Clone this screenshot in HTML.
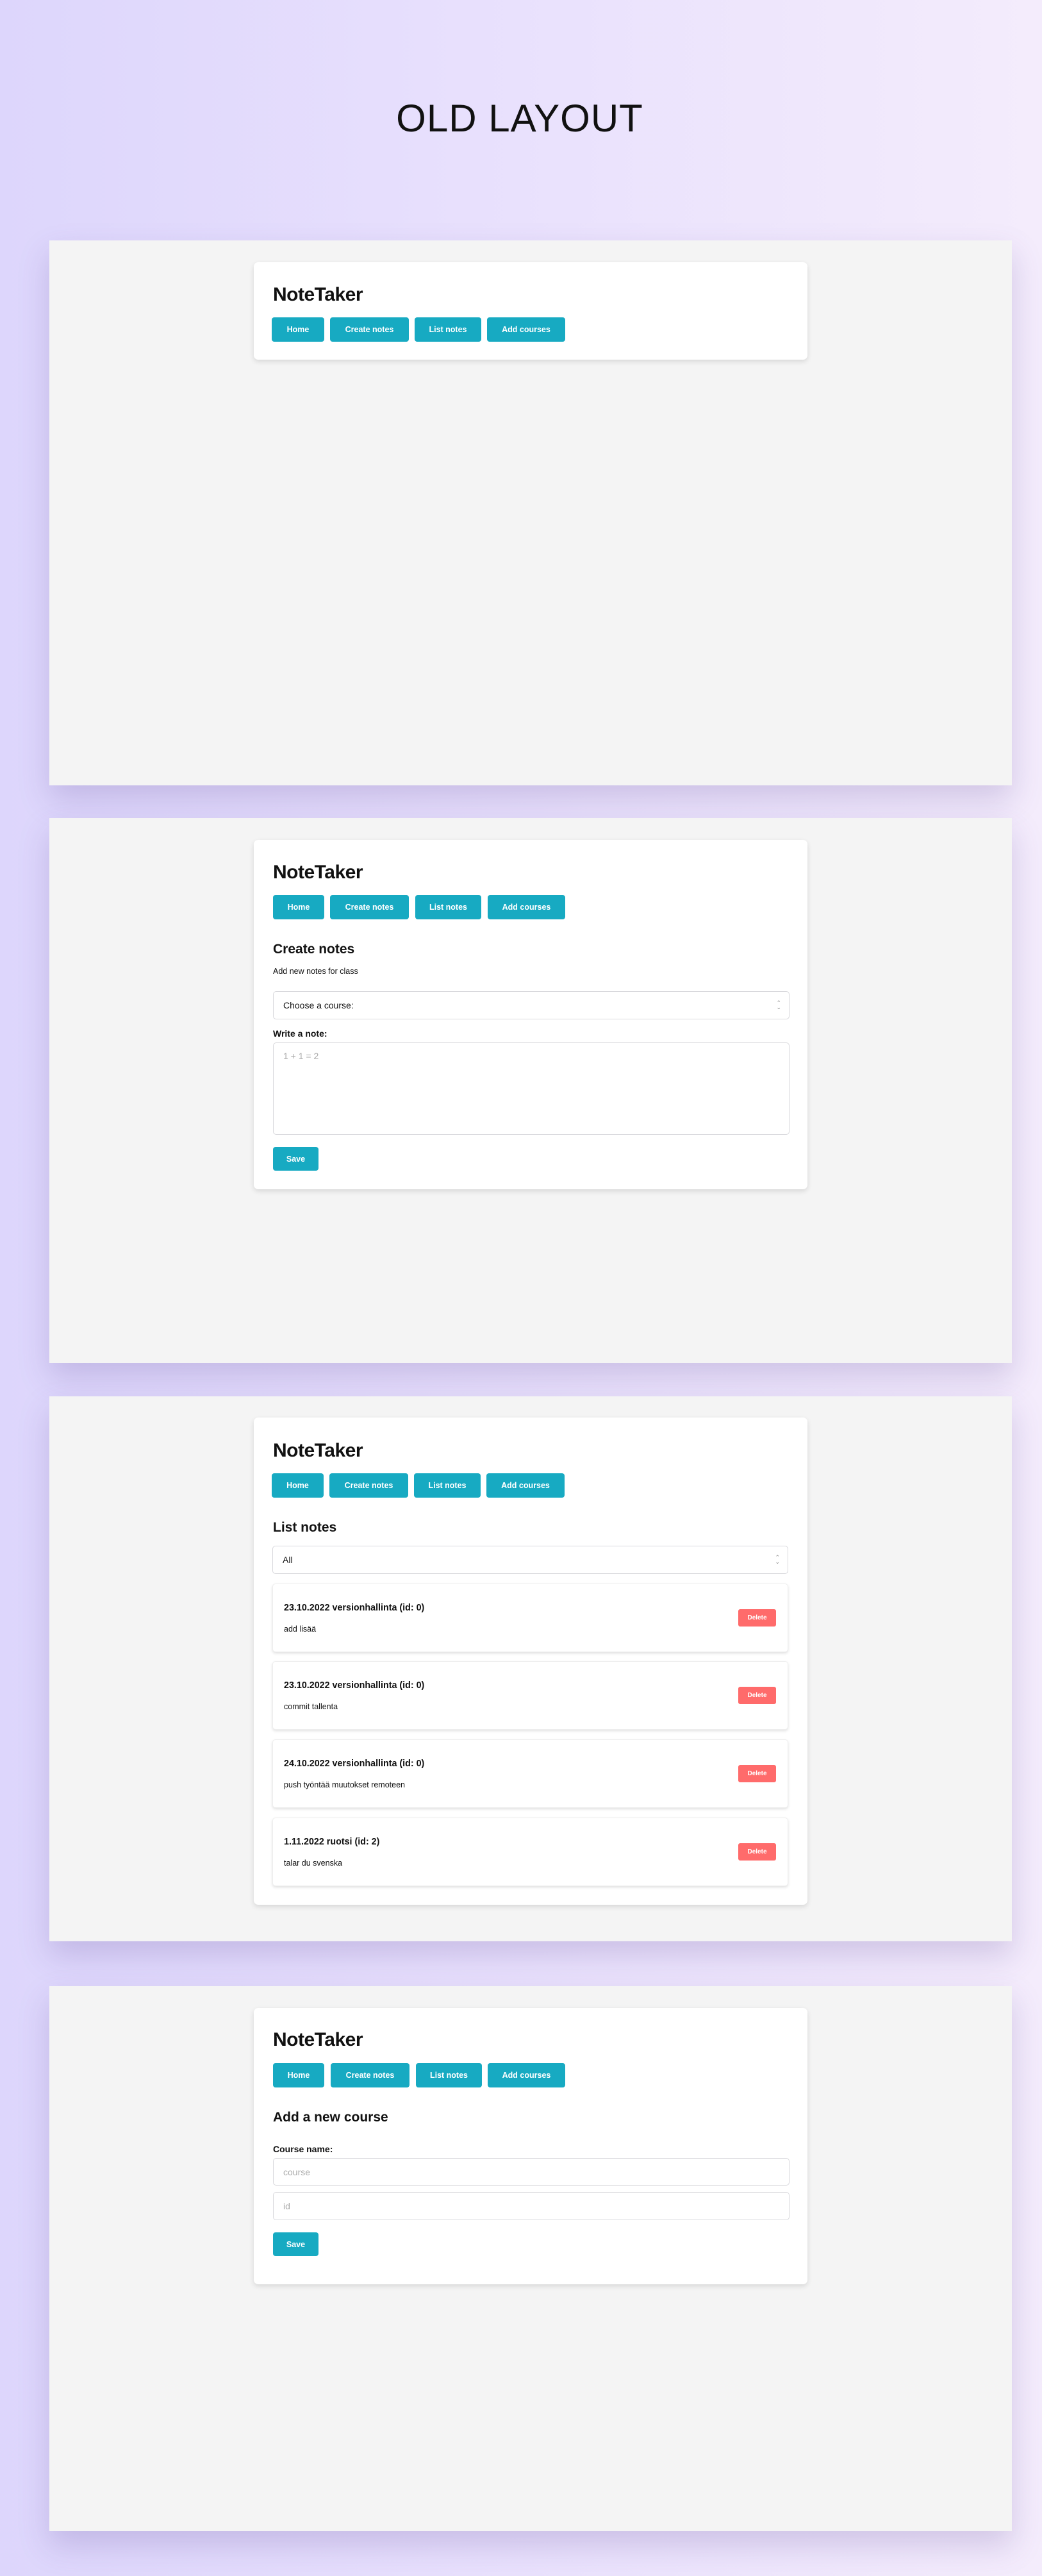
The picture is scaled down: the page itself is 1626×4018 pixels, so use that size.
<!DOCTYPE html>
<html><head><meta charset="utf-8"><style>
*{margin:0;padding:0;box-sizing:border-box}
body{width:1626px;height:4018px;position:relative;overflow:hidden;font-family:"Liberation Sans",sans-serif;color:#111;
background:linear-gradient(90deg,#ddd6fc 0%,#e8e0fd 45%,#f4ecfc 100%)}
.a{position:absolute}
.h1{left:0;width:1622px;top:150px;text-align:center;font-size:60px;line-height:70px;font-weight:300;color:#111;letter-spacing:1px}
.frame{position:absolute;left:77px;width:1502px;height:850px;background:#f4f4f4;box-shadow:0 22px 45px rgba(90,70,150,0.22)}
.card{position:absolute;left:396px;width:864px;background:#fff;border-radius:7px;box-shadow:0 3px 8px rgba(0,0,0,0.12)}
.t{position:absolute;left:426px;font-size:30px;font-weight:bold;line-height:30px;letter-spacing:-0.5px}
.btn{position:absolute;height:38px;background:#17aac2;color:#fff;font-size:12.5px;font-weight:bold;border-radius:4px;display:flex;align-items:center;justify-content:center}
.h2{position:absolute;left:426px;font-size:21px;font-weight:bold;line-height:24px}
.in{position:absolute;left:426px;width:806px;border:1px solid #d8d8dc;border-radius:5px;background:#fff;font-size:14px;padding-left:15px;display:flex;align-items:center}
.ph{color:#aaa}
.note{position:absolute;left:425px;width:805px;height:107px;background:#fff;border:1px solid #eee;border-radius:5px;box-shadow:0 2px 4px rgba(0,0,0,0.12)}
.nt{position:absolute;left:17px;top:29px;font-size:14.3px;font-weight:bold;color:#111}
.nx{position:absolute;left:17px;top:63px;font-size:12.5px}
.del{position:absolute;left:726px;top:39px;width:59px;height:27px;background:#ff6b6b;border-radius:3px;color:#fff;font-size:10px;font-weight:bold;display:flex;align-items:center;justify-content:center}
.arr{position:absolute;right:12px;top:50%;transform:translateY(-50%);font-size:9px;color:#888;line-height:7px;text-align:center}
.save{position:absolute;left:426px;width:71px;height:37px;background:#17aac2;color:#fff;font-size:12.5px;font-weight:bold;border-radius:4px;display:flex;align-items:center;justify-content:center}
.lbl{position:absolute;left:426px;font-size:14px;font-weight:bold}
</style></head><body>
<div class="a h1">OLD LAYOUT</div>

<div class="frame" style="top:375px"></div>
<div class="frame" style="top:1276px"></div>
<div class="frame" style="top:2178px"></div>
<div class="frame" style="top:3098px"></div>

<!-- card 1 -->
<div class="card" style="top:409px;height:152px"></div>
<div class="t" style="top:445px">NoteTaker</div>
<div class="btn" style="left:424px;top:495px;width:82px">Home</div>
<div class="btn" style="left:515px;top:495px;width:123px">Create notes</div>
<div class="btn" style="left:647px;top:495px;width:104px">List notes</div>
<div class="btn" style="left:760px;top:495px;width:122px">Add courses</div>

<!-- card 2 -->
<div class="card" style="top:1310px;height:545px"></div>
<div class="t" style="top:1346px">NoteTaker</div>
<div class="btn" style="left:426px;top:1396px;width:80px">Home</div>
<div class="btn" style="left:515px;top:1396px;width:123px">Create notes</div>
<div class="btn" style="left:648px;top:1396px;width:103px">List notes</div>
<div class="btn" style="left:761px;top:1396px;width:121px">Add courses</div>
<div class="h2" style="top:1469px">Create notes</div>
<div class="a" style="left:426px;top:1508px;font-size:12.5px">Add new notes for class</div>
<div class="in" style="top:1546px;height:44px">Choose a course:<div class="arr">&#8963;<br>&#8964;</div></div>
<div class="lbl" style="top:1604px">Write a note:</div>
<div class="in" style="top:1626px;height:144px;align-items:flex-start;padding-top:12px"><span class="ph">1 + 1 = 2</span></div>
<div class="save" style="top:1789px">Save</div>

<!-- card 3 -->
<div class="card" style="top:2211px;height:760px"></div>
<div class="t" style="top:2248px">NoteTaker</div>
<div class="btn" style="left:424px;top:2298px;width:81px">Home</div>
<div class="btn" style="left:514px;top:2298px;width:123px">Create notes</div>
<div class="btn" style="left:646px;top:2298px;width:104px">List notes</div>
<div class="btn" style="left:759px;top:2298px;width:122px">Add courses</div>
<div class="h2" style="top:2371px">List notes</div>
<div class="in" style="top:2411px;height:44px;left:425px;width:805px">All<div class="arr">&#8963;<br>&#8964;</div></div>
<div class="note" style="top:2470px"><div class="nt">23.10.2022 versionhallinta (id: 0)</div><div class="nx">add lisää</div><div class="del">Delete</div></div>
<div class="note" style="top:2591px"><div class="nt">23.10.2022 versionhallinta (id: 0)</div><div class="nx">commit tallenta</div><div class="del">Delete</div></div>
<div class="note" style="top:2713px"><div class="nt">24.10.2022 versionhallinta (id: 0)</div><div class="nx">push työntää muutokset remoteen</div><div class="del">Delete</div></div>
<div class="note" style="top:2835px"><div class="nt">1.11.2022 ruotsi (id: 2)</div><div class="nx">talar du svenska</div><div class="del">Delete</div></div>

<!-- card 4 -->
<div class="card" style="top:3132px;height:431px"></div>
<div class="t" style="top:3167px">NoteTaker</div>
<div class="btn" style="left:426px;top:3218px;width:80px">Home</div>
<div class="btn" style="left:516px;top:3218px;width:123px">Create notes</div>
<div class="btn" style="left:649px;top:3218px;width:103px">List notes</div>
<div class="btn" style="left:761px;top:3218px;width:121px">Add courses</div>
<div class="h2" style="top:3291px">Add a new course</div>
<div class="lbl" style="top:3344px">Course name:</div>
<div class="in" style="top:3366px;height:43px"><span class="ph">course</span></div>
<div class="in" style="top:3419px;height:44px"><span class="ph">id</span></div>
<div class="save" style="top:3482px;height:37px">Save</div>
</body></html>
